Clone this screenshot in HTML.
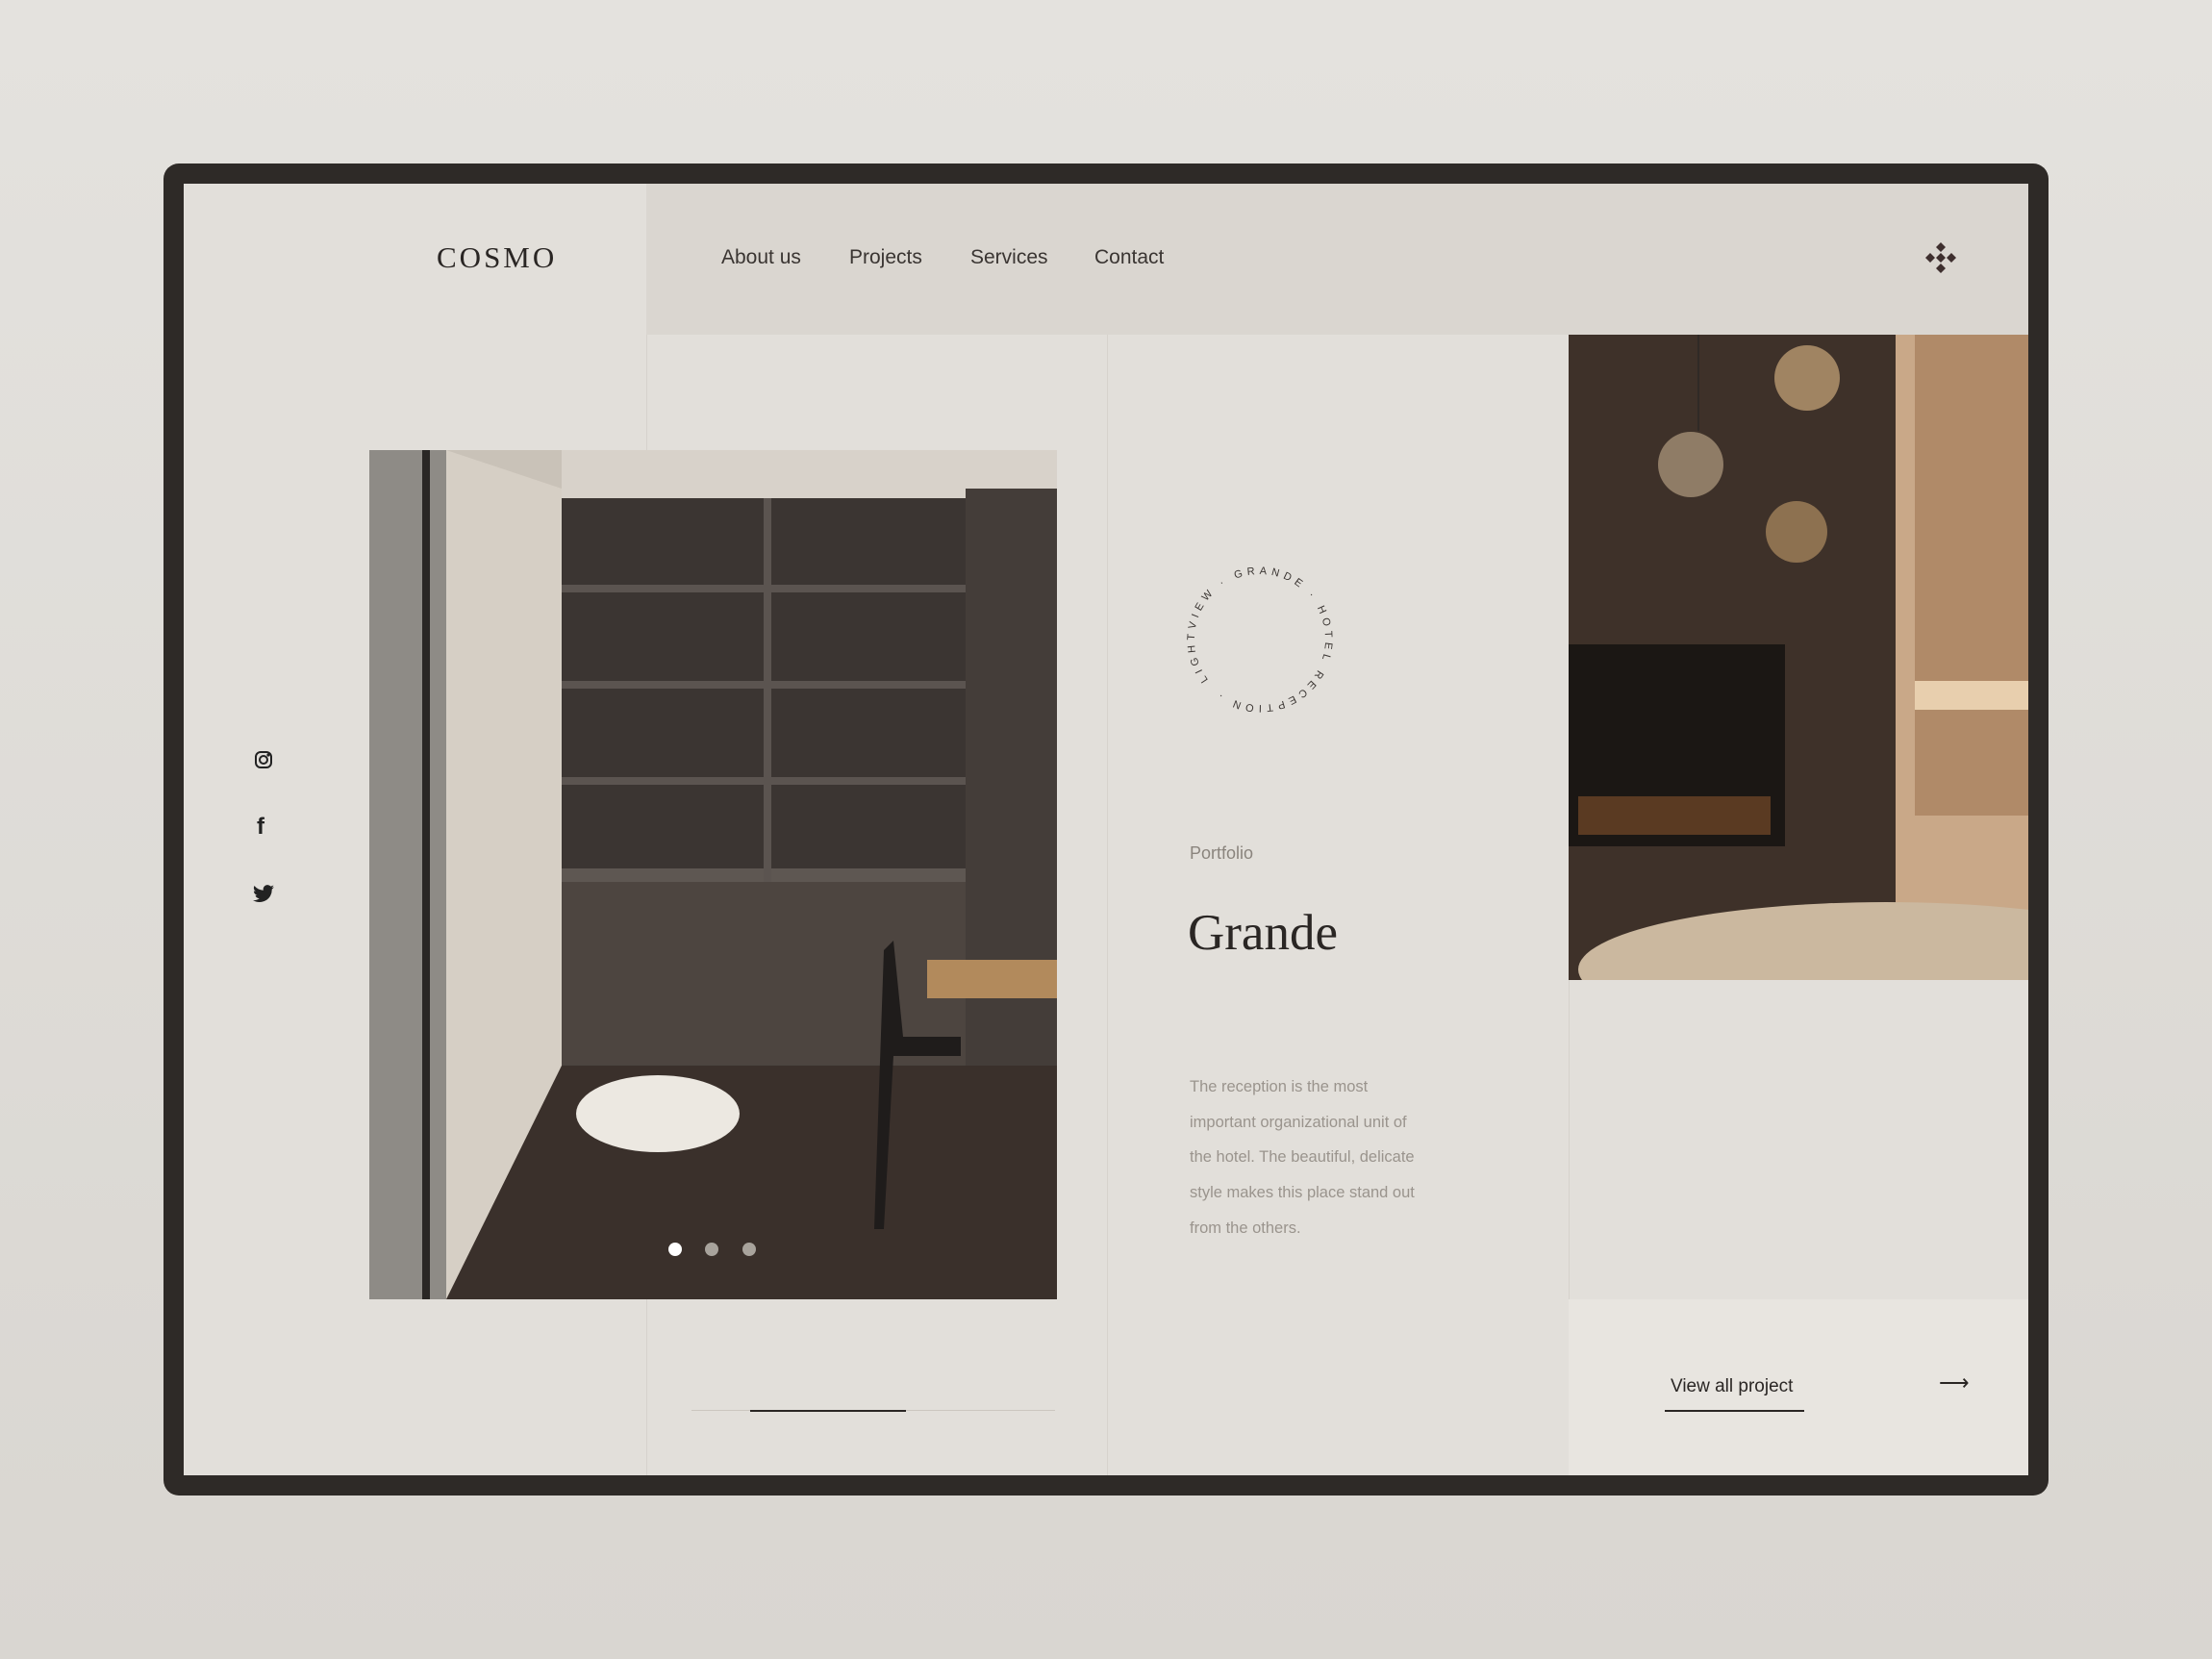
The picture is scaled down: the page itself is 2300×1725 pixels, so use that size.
<!DOCTYPE html>
<html><head><meta charset="utf-8"><style>
*{margin:0;padding:0;box-sizing:border-box}
body{width:2300px;height:1725px;background:linear-gradient(180deg,#e4e2de,#d9d6d1);position:relative;overflow:hidden;font-family:"Liberation Sans",sans-serif}
.frame{position:absolute;left:170px;top:170px;width:1960px;height:1385px;background:#2e2a27;border-radius:16px}
.inner{position:absolute;left:191px;top:191px;width:1918px;height:1343px;background:#e2dfda;overflow:hidden}
.a{position:absolute}
.nav{left:481px;top:0;width:1437px;height:157px;background:#dad6d0}
.vl{top:157px;width:1px;height:1186px;background:#d6d2cc}
.serif{font-family:"Liberation Serif",serif}
.link{top:65px;font-size:21px;color:#3a3532}
</style></head><body>
<div class="frame"></div>
<div class="inner">
 <div class="a nav"></div>
 <div class="a vl" style="left:481px"></div>
 <div class="a vl" style="left:960px"></div>
 <div class="a vl" style="left:1440px"></div>
 <div class="a serif" style="left:263px;top:59px;font-size:31px;letter-spacing:3px;color:#2a2624">COSMO</div>
 <div class="a link" style="left:559px">About us</div>
 <div class="a link" style="left:692px">Projects</div>
 <div class="a link" style="left:818px">Services</div>
 <div class="a link" style="left:947px">Contact</div>
 <svg class="a" style="left:1810px;top:60px" width="34" height="34" viewBox="0 0 34 34" fill="#3e2f2e"><path d="M17 1l5 5-5 5-5-5z M17 12l5 5-5 5-5-5z M17 23l5 5-5 5-5-5z M6 12l5 5-5 5-5-5z M28 12l5 5-5 5-5-5z"/></svg>

 <svg class="a" style="left:193px;top:277px" width="715" height="883" viewBox="0 0 715 883">
  <rect width="715" height="883" fill="#4a4440"/>
  <rect width="715" height="50" fill="#d8d2ca"/>
  <rect x="0" y="0" width="200" height="883" fill="#c9c2b8"/>
  <polygon points="80,0 200,40 200,640 80,883" fill="#d6cfc5"/>
  <rect x="0" y="0" width="80" height="883" fill="#8e8b86"/>
  <rect x="55" y="0" width="8" height="883" fill="#2a2725"/>
  <rect x="200" y="50" width="420" height="420" fill="#3b3532"/>
  <rect x="200" y="140" width="420" height="8" fill="#5b5450"/>
  <rect x="200" y="240" width="420" height="8" fill="#5b5450"/>
  <rect x="200" y="340" width="420" height="8" fill="#5b5450"/>
  <rect x="200" y="435" width="515" height="14" fill="#5e5752"/>
  <rect x="410" y="50" width="8" height="420" fill="#5b5450"/>
  <rect x="200" y="449" width="515" height="190" fill="#4d4540"/>
  <rect x="620" y="40" width="95" height="600" fill="#443d39"/>
  <polygon points="80,883 200,640 715,640 715,883" fill="#3a302b"/>
  <rect x="580" y="530" width="135" height="40" fill="#b28a5c"/>
  <path d="M535 520 l10 -10 l10 100 l60 0 l0 20 l-70 0 l-10 180 l-10 0z" fill="#1f1c1b"/>
  <ellipse cx="300" cy="690" rx="85" ry="40" fill="#ece8e1"/>
  <circle cx="318" cy="831" r="7" fill="#fff"/>
  <circle cx="356" cy="831" r="7" fill="#a8a39c"/>
  <circle cx="395" cy="831" r="7" fill="#a8a39c"/>
 </svg>

 <svg class="a" style="left:73px;top:589px" width="20" height="20" viewBox="0 0 20 20" fill="none" stroke="#222" stroke-width="2"><rect x="2" y="2" width="16" height="16" rx="5"/><circle cx="10" cy="10" r="4"/><circle cx="15" cy="5" r="0.6" fill="#222"/></svg>
 <div class="a" style="left:76px;top:655px;font-size:24px;font-weight:bold;color:#222">f</div>
 <svg class="a" style="left:71px;top:729px" width="24" height="20" viewBox="0 0 24 20" fill="#222"><path d="M23 2.3c-.8.4-1.7.6-2.6.7.9-.6 1.6-1.4 2-2.5-.9.5-1.9.9-2.9 1.1A4.5 4.5 0 0 0 11.8 5.7 12.8 12.8 0 0 1 2.5 1a4.5 4.5 0 0 0 1.4 6 4.5 4.5 0 0 1-2-.6 4.5 4.5 0 0 0 3.6 4.5 4.5 4.5 0 0 1-2 .1 4.5 4.5 0 0 0 4.2 3.1A9 9 0 0 1 1 16a12.8 12.8 0 0 0 19.7-11.4c.9-.6 1.6-1.4 2.3-2.3z"/></svg>

 <div class="a" style="left:528px;top:1275px;width:378px;height:1px;background:#cbc6bf"></div>
 <div class="a" style="left:589px;top:1275px;width:162px;height:2px;background:#2a2624"></div>

 <svg class="a" style="left:1029px;top:384px" width="180" height="180" viewBox="0 0 180 180">
  <defs><path id="c" d="M90 90 m-68 0 a68 68 0 1 1 136 0 a68 68 0 1 1 -136 0"/></defs>
  <g transform="rotate(-38 90 90)">
  <text font-family="Liberation Sans,sans-serif" font-size="11" letter-spacing="4.6" fill="#3a3532"><textPath href="#c" startOffset="0%">LIGHTVIEW · GRANDE · HOTEL RECEPTION · </textPath></text>
  </g>
 </svg>

 <div class="a" style="left:1046px;top:686px;font-size:18px;color:#8a847d">Portfolio</div>
 <div class="a serif" style="left:1044px;top:749px;font-size:53px;color:#2a2624">Grande</div>
 <div class="a" style="left:1046px;top:921px;font-size:16.5px;line-height:36.7px;color:#9a948d;width:245px">The reception is the most important organizational unit of the hotel. The beautiful, delicate style makes this place stand out from the others.</div>

 <svg class="a" style="left:1440px;top:157px" width="478" height="671" viewBox="0 0 478 671">
  <rect width="478" height="671" fill="#3e3129"/>
  <rect x="340" y="0" width="138" height="671" fill="#c9a888"/>
  <rect x="360" y="0" width="118" height="500" fill="#b08a68"/>
  <rect x="360" y="360" width="118" height="30" fill="#e8cfae"/>
  <rect x="0" y="322" width="225" height="210" fill="#1b1714"/>
  <rect x="10" y="480" width="200" height="40" fill="#5a3a22"/>
  <line x1="135" y1="0" x2="135" y2="100" stroke="#222" stroke-width="1"/>
  <circle cx="127" cy="135" r="34" fill="#8f7c66"/>
  <circle cx="248" cy="45" r="34" fill="#a08462"/>
  <circle cx="237" cy="205" r="32" fill="#8d7150"/>
  <ellipse cx="330" cy="660" rx="320" ry="70" fill="#cbb89f"/>
 </svg>

 <div class="a" style="left:1440px;top:1160px;width:478px;height:183px;background:#e8e5e0"></div>
 <div class="a" style="left:1546px;top:1240px;font-size:19px;color:#2a2624">View all project</div>
 <div class="a" style="left:1540px;top:1275px;width:145px;height:2px;background:#2a2624"></div>
 <div class="a" style="left:1825px;top:1234px;font-size:22px;color:#2a2624">⟶</div>
</div>
</body></html>
